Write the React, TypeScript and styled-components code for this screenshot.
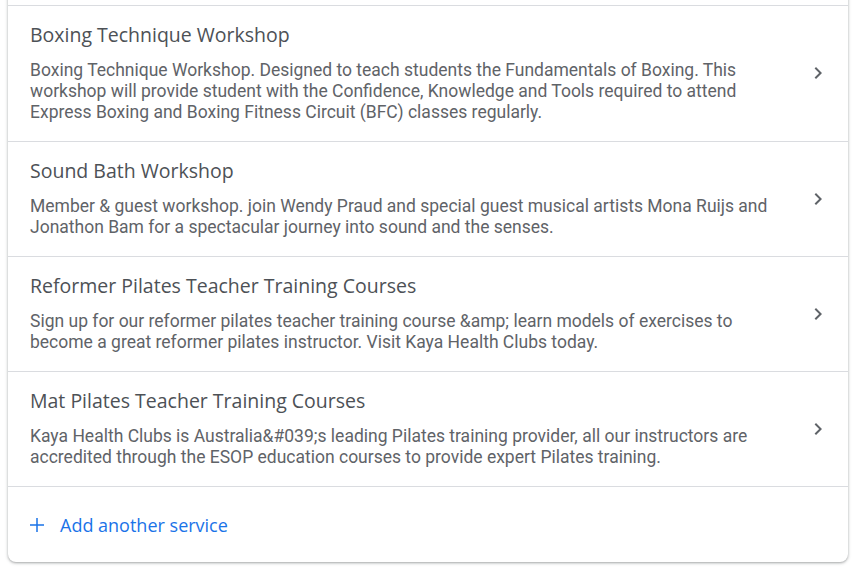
import React from "react";
import styled, { createGlobalStyle } from "styled-components";

const Global = createGlobalStyle`
  html, body { margin: 0; padding: 0; background: #ffffff; }
  body { font-family: Roboto, "Noto Sans", Arial, sans-serif; overflow: hidden; }
`;

const Page = styled.div`
  width: 859px;
  height: 567px;
  padding: 0 11px 0 8px;
  box-sizing: border-box;
  overflow: hidden;
`;

const Card = styled.div`
  margin-top: -20px;
  background: #fff;
  border-radius: 8px;
  box-shadow: 0 1px 2px 0 rgba(60, 64, 67, 0.3), 0 1px 3px 1px rgba(60, 64, 67, 0.15);
  display: flex;
  flex-direction: column;
`;

const TopSpacer = styled.div`
  height: 25px;
`;

const Row = styled.div`
  display: flex;
  align-items: center;
  border-top: 1px solid #dadce0;
  padding: 17px 18px 18px 22px;
  cursor: pointer;
`;

const Body = styled.div`
  flex: 1;
  min-width: 0;
  max-width: 752px;
  display: flex;
  flex-direction: column;
  gap: 13px;
`;

const Title = styled.div`
  font-family: "Open Sans", Roboto, sans-serif;
  font-size: 19.5px;
  line-height: 24px;
  font-weight: 500;
  color: #4d5156;
`;

const Desc = styled.div`
  font-family: Roboto, Arial, sans-serif;
  font-size: 17.5px;
  line-height: 21px;
  color: #5f6368;
`;

const Chevron = styled.div`
  margin-left: auto;
  width: 24px;
  height: 24px;
  display: flex;
  align-items: center;
  justify-content: center;
  color: #5f6368;
  flex-shrink: 0;
`;

const AddRow = styled.div`
  border-top: 1px solid #dadce0;
  height: 75px;
  display: flex;
  align-items: center;
  padding-left: 17px;
  gap: 11px;
  color: #1a73e8;
`;

const AddLabel = styled.span`
  font-family: "Open Sans", Roboto, sans-serif;
  font-size: 18px;
  font-weight: 500;
  color: #1a73e8;
`;

const ChevronIcon = () => (
  <svg width="24" height="24" viewBox="0 0 24 24" fill="currentColor">
    <path d="M10 6L8.59 7.41 13.17 12l-4.58 4.59L10 18l6-6z" />
  </svg>
);

const PlusIcon = () => (
  <svg width="24" height="24" viewBox="0 0 24 24" fill="currentColor">
    <path d="M19 12.75h-6.25V19h-1.5v-6.25H5v-1.5h6.25V5h1.5v6.25H19z" />
  </svg>
);

const services = [
  {
    title: "Boxing Technique Workshop",
    desc: "Boxing Technique Workshop. Designed to teach students the Fundamentals of Boxing. This workshop will provide student with the Confidence, Knowledge and Tools required to attend Express Boxing and Boxing Fitness Circuit (BFC) classes regularly.",
  },
  {
    title: "Sound Bath Workshop",
    desc: "Member & guest workshop. join Wendy Praud and special guest musical artists Mona Ruijs and Jonathon Bam for a spectacular journey into sound and the senses.",
  },
  {
    title: "Reformer Pilates Teacher Training Courses",
    desc: "Sign up for our reformer pilates teacher training course &amp; learn models of exercises to become a great reformer pilates instructor. Visit Kaya Health Clubs today.",
  },
  {
    title: "Mat Pilates Teacher Training Courses",
    desc: "Kaya Health Clubs is Australia&#039;s leading Pilates training provider, all our instructors are accredited through the ESOP education courses to provide expert Pilates training.",
  },
];

export default function App() {
  return (
    <Page>
      <Global />
      <Card>
        <TopSpacer />
        {services.map((s) => (
          <Row key={s.title}>
            <Body>
              <Title>{s.title}</Title>
              <Desc>{s.desc}</Desc>
            </Body>
            <Chevron>
              <ChevronIcon />
            </Chevron>
          </Row>
        ))}
        <AddRow>
          <PlusIcon />
          <AddLabel>Add another service</AddLabel>
        </AddRow>
      </Card>
    </Page>
  );
}
